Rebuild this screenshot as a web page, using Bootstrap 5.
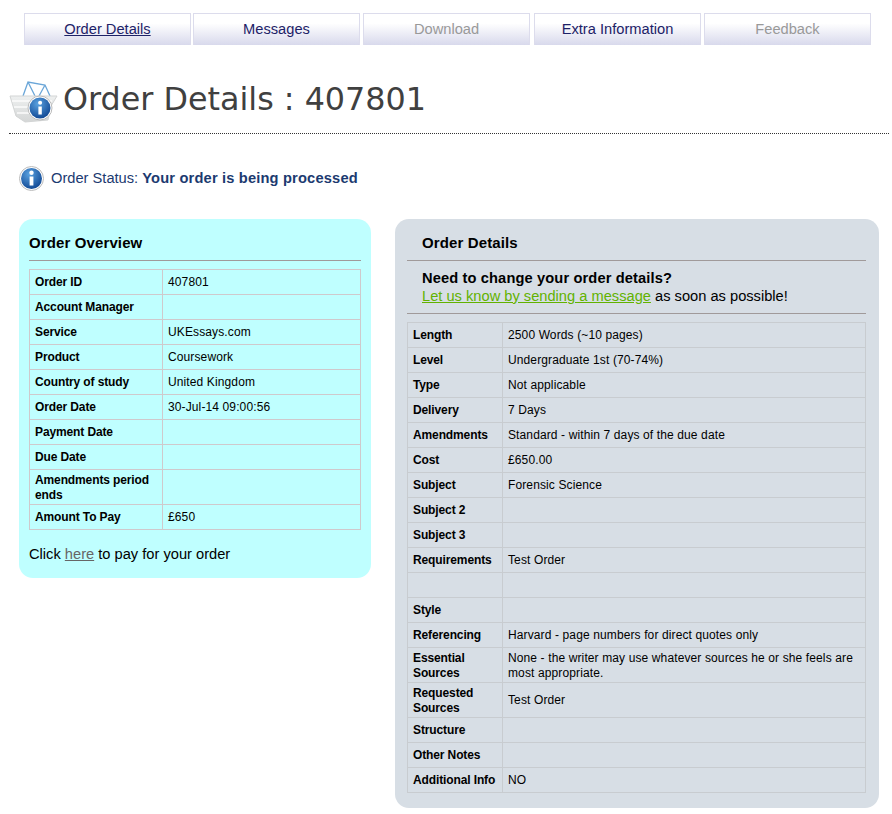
<!DOCTYPE html>
<html lang="en"><head><meta charset="utf-8"><title>Order Details</title>
<link href="https://cdn.jsdelivr.net/npm/bootstrap@5.3.0/dist/css/bootstrap.min.css" rel="stylesheet">
<style>
body{font-family:"Liberation Sans",Arial,sans-serif;background:#fff;color:#000;font-size:12px;line-height:15px}
.page-wrap{padding:13px 3px 6px 9px}
.tab-bar{gap:3px;padding-left:15px;padding-right:15px;margin:0}
.tab-item{width:167px;height:32px;border:1px solid #dcdcec;border-bottom:0;background:linear-gradient(#fff 30%,#d8d9ec);text-align:center;font-size:14.67px;line-height:30px;color:#1d2267;text-decoration:none}
.tab-item.active-tab{text-decoration:underline}
.tab-item.off-tab{color:#999}
.tab-item.tab-tight{margin-left:-1px}
.tab-item.tab-loose{margin-left:1px}
.head-row{margin-top:28px;height:61px;border-bottom:1px dotted #333;gap:5px;padding-bottom:8px}
.head-row svg{margin-top:4px}
.head-row h1{font-family:"DejaVu Sans",Verdana,sans-serif;font-size:31.8px;line-height:50px;margin:0;color:#404040;font-weight:400}
.status-row{margin:30px 0 0 10px;height:28px;gap:7px;font-size:14.67px;color:#1c3a70}
.status-row b{letter-spacing:.17px}
.panels{margin:27px 0 0 10px;gap:24px}
.pane-a{width:352px;height:359px;background:#bfffff;border-radius:14px;padding:0 10px}
.pane-b{width:484px;height:589px;background:#d7dee5;border-radius:14px;padding:0 13px 0 12px}
.pane-title{font-size:15px;font-weight:700;line-height:17px;letter-spacing:.12px;padding-top:15px;height:42px;border-bottom:1px solid #a09a9a;margin:0}
.pane-b .pane-title{padding-left:15px}
.notice{padding:8px 15px 0;height:53px;border-bottom:1px solid #a09a9a;font-size:14.67px;line-height:18px;margin-bottom:8px}
.notice b{letter-spacing:.12px}
.notice a{color:#62b200}
.info-tbl{margin:0;table-layout:fixed;width:100%;--bs-table-bg:transparent;--bs-table-border-color:#cfc9cc;border-color:#cfc9cc}
.pane-a .info-tbl{margin-top:8px;width:332px}
.pane-b .info-tbl{--bs-table-border-color:#c8ccd0;border-color:#c8ccd0}
.info-tbl th,.info-tbl td{font-size:12px;line-height:15px;padding:2px 5px;height:25px;letter-spacing:.12px;color:#000;vertical-align:middle}
.info-tbl th{font-weight:700;letter-spacing:-.12px;padding-right:2px}
.info-tbl .two-line{padding-top:3px;padding-bottom:1px}
.pay-line{font-size:14.67px;line-height:17px;margin:16px 0 0}
.pay-line a{color:#666}
</style></head><body>
<div class="page-wrap">
<nav class="nav tab-bar flex-nowrap">
<a class="tab-item active-tab" href="#">Order Details</a>
<a class="tab-item tab-tight" href="#">Messages</a>
<a class="tab-item off-tab" href="#">Download</a>
<a class="tab-item tab-loose" href="#">Extra Information</a>
<a class="tab-item off-tab" href="#">Feedback</a>
</nav>
<div class="head-row d-flex align-items-center">
<svg width="49" height="44" viewBox="0 0 49 44"><defs><radialGradient id="g1" cx=".4" cy=".3" r=".8"><stop offset="0" stop-color="#5aa2e0"/><stop offset="1" stop-color="#0a3f8c"/></radialGradient><linearGradient id="g3" x1="0" y1="0" x2="0" y2="1"><stop offset="0" stop-color="#eef0f0"/><stop offset="1" stop-color="#d4d6d6"/></linearGradient></defs>
<path d="M14 17 19 3 36 6 41 17M19 3l7 14M36 6l-6 11" fill="none" stroke="#6aa6d8" stroke-width="1.3"/>
<path d="M1 17h47l-6 10-3 14-23 2-9-6-3-10z" fill="url(#g3)" stroke="#d3d5d5"/><path d="M3 22h40M5 28h34M8 34h28" stroke="#fbfbfb" stroke-width="1.6"/>
<circle cx="31" cy="29" r="12" fill="#fff" stroke="#bbb"/><circle cx="31" cy="29" r="10.5" fill="url(#g1)"/>
<rect x="29.4" y="27.5" width="3.4" height="8" fill="#fff"/><circle cx="31.1" cy="23.7" r="2" fill="#fff"/></svg>
<h1>Order Details : 407801</h1>
</div>
<div class="status-row d-flex align-items-center">
<svg width="25" height="25" viewBox="0 0 25 25"><defs><radialGradient id="g2" cx=".4" cy=".3" r=".8"><stop offset="0" stop-color="#5aa2e0"/><stop offset="1" stop-color="#0a3f8c"/></radialGradient></defs><circle cx="12.5" cy="12.5" r="12" fill="#fff" stroke="#bbb"/><circle cx="12.5" cy="12.5" r="10.5" fill="url(#g2)"/><rect x="10.6" y="10.5" width="3.8" height="9" fill="#fff"/><circle cx="12.5" cy="6.8" r="2.2" fill="#fff"/></svg>
<div>Order Status: <b>Your order is being processed</b></div>
</div>
<div class="panels d-flex align-items-start">
<section class="pane-a">
<h2 class="pane-title">Order Overview</h2>
<table class="table table-bordered info-tbl"><colgroup><col style="width:133px"><col></colgroup><tbody>
<tr><th>Order ID</th><td>407801</td></tr>
<tr><th>Account Manager</th><td></td></tr>
<tr><th>Service</th><td>UKEssays.com</td></tr>
<tr><th>Product</th><td>Coursework</td></tr>
<tr><th>Country of study</th><td>United Kingdom</td></tr>
<tr><th>Order Date</th><td>30-Jul-14 09:00:56</td></tr>
<tr><th>Payment Date</th><td></td></tr>
<tr><th>Due Date</th><td></td></tr>
<tr><th class="two-line">Amendments period ends</th><td></td></tr>
<tr><th>Amount To Pay</th><td>£650</td></tr>
</tbody></table>
<p class="pay-line">Click <a href="#">here</a> to pay for your order</p>
</section>
<section class="pane-b">
<h2 class="pane-title">Order Details</h2>
<div class="notice"><b>Need to change your order details?</b><br><a href="#">Let us know by sending a message</a> as soon as possible!</div>
<table class="table table-bordered info-tbl"><colgroup><col style="width:95px"><col></colgroup><tbody>
<tr><th>Length</th><td>2500 Words (~10 pages)</td></tr>
<tr><th>Level</th><td>Undergraduate 1st (70-74%)</td></tr>
<tr><th>Type</th><td>Not applicable</td></tr>
<tr><th>Delivery</th><td>7 Days</td></tr>
<tr><th>Amendments</th><td>Standard - within 7 days of the due date</td></tr>
<tr><th>Cost</th><td>£650.00</td></tr>
<tr><th>Subject</th><td>Forensic Science</td></tr>
<tr><th>Subject 2</th><td></td></tr>
<tr><th>Subject 3</th><td></td></tr>
<tr><th>Requirements</th><td>Test Order</td></tr>
<tr><th></th><td></td></tr>
<tr><th>Style</th><td></td></tr>
<tr><th>Referencing</th><td>Harvard - page numbers for direct quotes only</td></tr>
<tr><th class="two-line">Essential Sources</th><td class="two-line">None - the writer may use whatever sources he or she feels are most appropriate.</td></tr>
<tr><th class="two-line">Requested Sources</th><td>Test Order</td></tr>
<tr><th>Structure</th><td></td></tr>
<tr><th>Other Notes</th><td></td></tr>
<tr><th>Additional Info</th><td>NO</td></tr>
</tbody></table>
</section>
</div>
</div>
<script src="https://cdn.jsdelivr.net/npm/bootstrap@5.3.0/dist/js/bootstrap.bundle.min.js"></script>
</body></html>
